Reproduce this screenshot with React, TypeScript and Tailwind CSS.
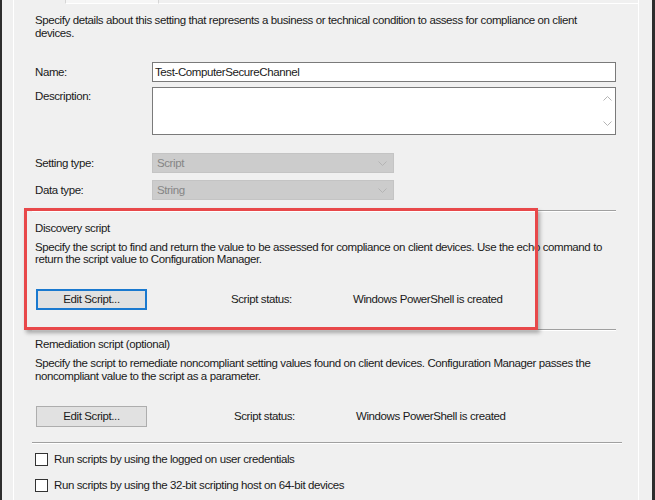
import React from "react";

const TEXT = "font-['Liberation_Sans',Arial,sans-serif] text-[11.5px] tracking-[-0.4px] text-[#1a1a1a]";

function Chevron({ up = false }: { up?: boolean }) {
  return (
    <svg width="9" height="5" viewBox="0 0 9 5" className="block">
      <path d={up ? "M0.5 4.5 L4.5 0.5 L8.5 4.5" : "M0.5 0.5 L4.5 4.5 L8.5 0.5"} fill="none" stroke="#b4b4b4" strokeWidth="1" />
    </svg>
  );
}

function Field({ label, children, top = false }: { label: string; children: React.ReactNode; top?: boolean }) {
  return (
    <div className={top ? "flex items-start" : "flex items-center"}>
      <div className={top ? "w-[117px] pt-[3px] leading-[13px]" : "w-[117px] leading-[13px]"}>{label}</div>
      {children}
    </div>
  );
}

function DisabledSelect({ value }: { value: string }) {
  return (
    <div className="w-[242px] h-[20px] bg-[#cccccc] border border-[#c4c4c4] flex items-center justify-between pl-[4px] pr-[6px]">
      <span className="text-[#858585] leading-[13px]">{value}</span>
      <Chevron />
    </div>
  );
}

function Sep({ wide = false }: { wide?: boolean }) {
  return <div className={wide ? "-ml-[3px] w-[590px] h-[2px] border-t border-[#a0a0a0] border-b border-b-white" : "-ml-[3px] w-[584px] h-[2px] border-t border-[#a0a0a0] border-b border-b-white"} />;
}

function ScriptRow({ focused, gap }: { focused: boolean; gap: "a" | "b" }) {
  return (
    <div className="flex items-center h-[21px]">
      <button
        className={
          focused
            ? "ml-[1px] w-[111px] h-[21px] bg-[#e1e1e1] border-2 border-[#1a79cf] leading-[13px]"
            : "ml-[1px] w-[111px] h-[21px] bg-[#e1e1e1] border border-[#adadad] leading-[13px]"
        }
      >
        Edit Script...
      </button>
      <span className={gap === "a" ? "ml-[84px] w-[122px] leading-[13px]" : "ml-[87px] w-[122px] leading-[13px]"}>Script status:</span>
      <span className="leading-[13px]">Windows PowerShell is created</span>
    </div>
  );
}

function Check({ label, className }: { label: string; className: string }) {
  return (
    <div className={`flex items-center ${className}`}>
      <div className="w-[13px] h-[13px] border border-[#333333] bg-white" />
      <span className="ml-[6px] leading-[13px]">{label}</span>
    </div>
  );
}

export default function App() {
  return (
    <div className={`relative w-[655px] h-[500px] overflow-hidden bg-[#f0f0f0] flex ${TEXT}`}>
      <div className="w-[2px] bg-[#2d2d2d]" />
      <div className="w-[11px]" />

      <div className="flex-1 flex flex-col min-w-0">
        {/* tab strip */}
        <div className="h-[4px] flex">
          <div className="w-[52px] border-l border-white" />
          <div className="w-[94px] bg-[#f6f6f6] border-x border-[#d6d6d6] border-b border-b-white" />
          <div className="flex-1 border-b border-white border-r" />
        </div>

        {/* tab panel */}
        <div className="flex-1 border-l border-r border-white flex">
          <div className="flex-1 flex flex-col pl-[21px]">
            <div className="mt-[10px] leading-[13px]">
              <div className="whitespace-nowrap">Specify details about this setting that represents a business or technical condition to assess for compliance on client</div>
              <div className="whitespace-nowrap">devices.</div>
            </div>

            <div className="mt-[22px]">
              <Field label="Name:">
                <div className="w-[464px] h-[20px] bg-white border border-[#7a7a7a] flex items-center pl-[2px] leading-[13px]">Test-ComputerSecureChannel</div>
              </Field>
            </div>

            <div className="mt-[5px]">
              <Field label="Description:" top>
                <div className="w-[464px] h-[48px] bg-white border border-[#7a7a7a] flex justify-end">
                  <div className="w-[16px] flex flex-col items-center justify-between pt-[8px] pb-[8px]">
                    <Chevron up />
                    <Chevron />
                  </div>
                </div>
              </Field>
            </div>

            <div className="mt-[18px]">
              <Field label="Setting type:">
                <DisabledSelect value="Script" />
              </Field>
            </div>
            <div className="mt-[7px]">
              <Field label="Data type:">
                <DisabledSelect value="String" />
              </Field>
            </div>

            <div className="mt-[10px]">
              <Sep />
            </div>

            <div className="mt-[10px] leading-[13px]">Discovery script</div>
            <div className="mt-[6px] leading-[12px]">
              <div className="whitespace-nowrap">Specify the script to find and return the value to be assessed for compliance on client devices. Use the echo command to</div>
              <div className="whitespace-nowrap">return the script value to Configuration Manager.</div>
            </div>
            <div className="mt-[24px]">
              <ScriptRow focused gap="a" />
            </div>

            <div className="mt-[19px]">
              <Sep />
            </div>

            <div className="mt-[7px] leading-[13px]">Remediation script (optional)</div>
            <div className="mt-[6px] leading-[13px]">
              <div className="whitespace-nowrap">Specify the script to remediate noncompliant setting values found on client devices. Configuration Manager passes the</div>
              <div className="whitespace-nowrap">noncompliant value to the script as a parameter.</div>
            </div>
            <div className="mt-[23px]">
              <ScriptRow focused={false} gap="b" />
            </div>

            <div className="mt-[15px]">
              <Sep wide />
            </div>

            <Check className="mt-[9px]" label="Run scripts by using the logged on user credentials" />
            <Check className="mt-[13px]" label="Run scripts by using the 32-bit scripting host on 64-bit devices" />
          </div>
        </div>
      </div>

      <div className="w-[13px]" />
      <div className="w-[3px] bg-[#2d2d2d]" />

      {/* annotation highlight */}
      <div className="absolute left-[24px] top-[208px] w-[514px] h-[122px] border-[3px] border-[#e8484a] shadow-[2px_3px_4px_rgba(0,0,0,0.3)] pointer-events-none" />
    </div>
  );
}
